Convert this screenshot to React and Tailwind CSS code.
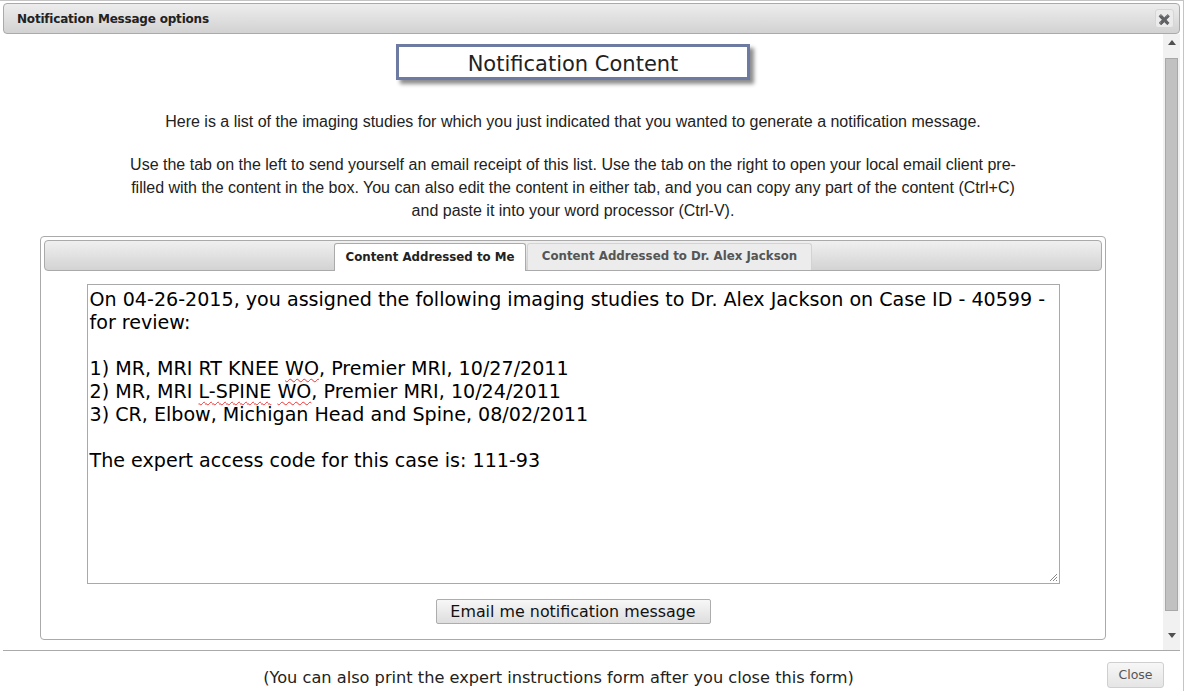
import React from 'react';

const verdana = { fontFamily: '"DejaVu Sans", Verdana, sans-serif' };

function Misspelled({ children }) {
    return (
        <span className="underline decoration-wavy decoration-[#e33] decoration-1 underline-offset-[3px]">
            {children}
        </span>
    );
}

export default function App() {
    return (
        <div className="w-[1184px] h-[691px] bg-white overflow-hidden border-r border-t border-[#c4c4c4] text-[#222] flex flex-col">
            {/* title bar */}
            <div className="mx-[3px] mt-[2px] h-[31px] shrink-0 flex items-center justify-between rounded-[4px] border border-[#aaa] bg-gradient-to-b from-[#ededed] to-[#d2d2d2] pl-[13px] pr-[5px]">
                <span className="font-['DejaVu_Sans'] font-bold text-[12px] text-[#222] tracking-[-0.2px]">
                    Notification Message options
                </span>
                <button className="w-[19px] h-[19px] flex items-center justify-center rounded-[3px] border border-[#d6d6d6] bg-[#ebebeb] text-[#9a9a9a] text-[10px] leading-none">
                    ✖
                </button>
            </div>

            {/* scroll area */}
            <div className="flex h-[616px] shrink-0">
                <div className="w-[1146px] flex flex-col items-center pt-[10px]">
                    <div
                        style={verdana}
                        className="w-[354px] h-[36px] pt-[5px] flex items-center justify-center border-[3px] border-[#6d7ba3] bg-white text-[21px] leading-none text-[#222] shadow-[4px_4px_4px_rgba(0,0,0,0.45)]"
                    >
                        Notification Content
                    </div>

                    <p className="mt-[30px] font-['Liberation_Sans'] text-[16px] leading-[23px] text-[#222] text-center">
                        Here is a list of the imaging studies for which you just indicated that you wanted to generate a notification message.
                    </p>
                    <p className="mt-[20px] font-['Liberation_Sans'] text-[16px] leading-[23px] text-[#222] text-center whitespace-nowrap">
                        Use the tab on the left to send yourself an email receipt of this list. Use the tab on the right to open your local email client pre-
                        <br />
                        filled with the content in the box. You can also edit the content in either tab, and you can copy any part of the content (Ctrl+C)
                        <br />
                        and paste it into your word processor (Ctrl-V).
                    </p>

                    {/* tabs panel */}
                    <div className="mt-[14px] w-[1066px] h-[404px] rounded-[4px] border border-[#aaa] p-[3px] flex flex-col items-center">
                        <div className="w-full h-[31px] shrink-0 rounded-[4px] border border-[#aaa] bg-gradient-to-b from-[#f0f0f0] to-[#d3d3d3] flex items-end justify-center gap-[1px] -mb-[1px] relative z-0">
                            <div
                                style={verdana}
                                className="h-[28px] w-[192px] -mb-[1px] flex items-center justify-center rounded-t-[3px] border border-b-0 border-[#aaa] bg-white font-bold text-[11.8px] text-[#222]"
                            >
                                Content Addressed to Me
                            </div>
                            <div
                                style={verdana}
                                className="h-[27px] w-[285px] flex items-center justify-center rounded-t-[3px] border border-b-0 border-[#d3d3d3] bg-[#ececec] font-bold text-[11.8px] text-[#555]"
                            >
                                Content Addressed to Dr. Alex Jackson
                            </div>
                        </div>

                        <div
                            style={verdana}
                            className="mt-[14px] w-[973px] h-[300px] shrink-0 border border-[#a9a9a9] px-[2px] pt-[3px] text-[19.1px] leading-[23px] text-black whitespace-pre relative"
                        >
                            <div>On 04-26-2015, you assigned the following imaging studies to Dr. Alex Jackson on Case ID - 40599 -</div>
                            <div>for review:</div>
                            <div>&nbsp;</div>
                            <div>1) MR, MRI RT KNEE <Misspelled>WO</Misspelled>, Premier MRI, 10/27/2011</div>
                            <div>2) MR, MRI <Misspelled>L-SPINE</Misspelled> <Misspelled>WO</Misspelled>, Premier MRI, 10/24/2011</div>
                            <div>3) CR, Elbow, Michigan Head and Spine, 08/02/2011</div>
                            <div>&nbsp;</div>
                            <div>The expert access code for this case is: 111-93</div>
                            <svg className="absolute right-[1px] bottom-[1px]" width="10" height="10" viewBox="0 0 10 10">
                                <path d="M9 2 L2 9 M9 5 L5 9 M9 8 L8 9" stroke="#888" strokeWidth="1" />
                            </svg>
                        </div>

                        <button
                            style={verdana}
                            className="mt-[15px] w-[275px] h-[25px] rounded-[2px] border border-[#adadad] bg-gradient-to-b from-[#f7f7f7] to-[#dedede] text-[15.9px] text-[#111] leading-none"
                        >
                            Email me notification message
                        </button>
                    </div>
                </div>

                {/* scrollbar */}
                <div className="ml-[17px] w-[17px] h-full bg-[#f1f1f1] flex flex-col items-center">
                    <div className="h-[17px] w-full flex items-center justify-center">
                        <svg width="8" height="5" viewBox="0 0 8 5">
                            <path d="M0 5 L4 0 L8 5 Z" fill="#505050" />
                        </svg>
                    </div>
                    <div className="mt-[7px] w-[13px] h-[553px] bg-[#c1c1c1] border border-[#a8a8a8]" />
                    <div className="mt-auto mb-[6px] h-[17px] w-full flex items-center justify-center">
                        <svg width="8" height="5" viewBox="0 0 8 5">
                            <path d="M0 0 L8 0 L4 5 Z" fill="#505050" />
                        </svg>
                    </div>
                </div>
            </div>

            {/* footer */}
            <div className="mx-[3px] border-t border-[#aaa] flex-1 flex items-start">
                <div style={verdana} className="w-[1111px] pt-[16px] text-center text-[16.2px] leading-[22px] text-[#222]">
                    (You can also print the expert instructions form after you close this form)
                </div>
                <button
                    style={verdana}
                    className="-ml-[7px] mt-[11px] w-[57px] h-[26px] rounded-[3px] border border-[#cfcfcf] bg-gradient-to-b from-[#f7f7f7] to-[#e5e5e5] text-[12.5px] text-[#555]"
                >
                    Close
                </button>
            </div>
        </div>
    );
}
